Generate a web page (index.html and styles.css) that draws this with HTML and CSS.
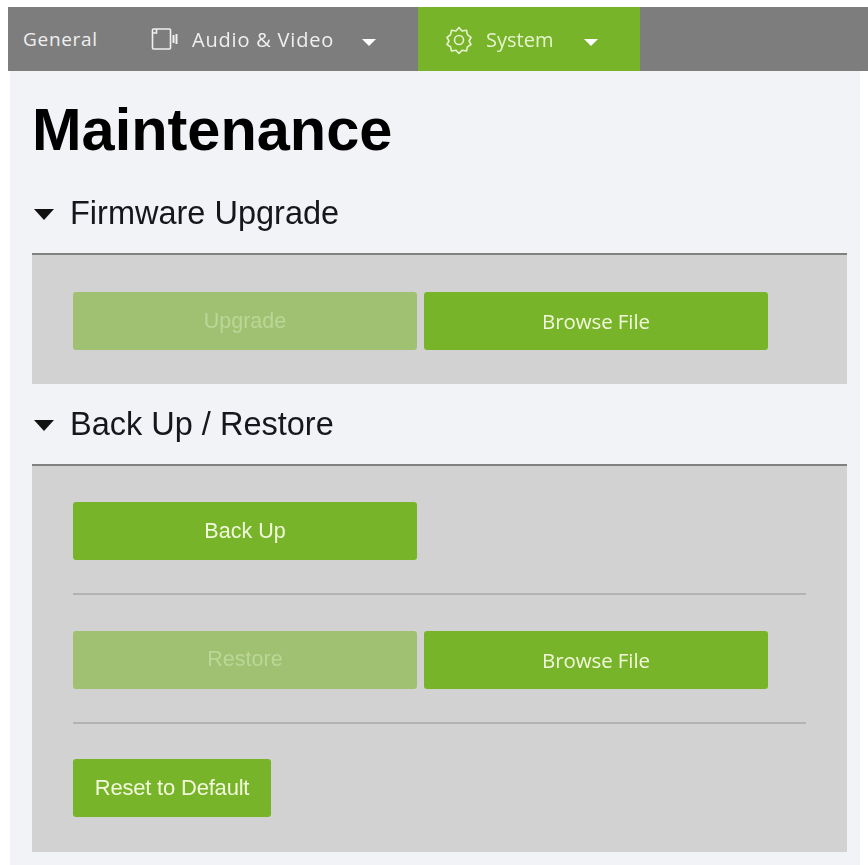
FILE: index.html
```html
<!DOCTYPE html>
<html lang="en">
<head>
    <meta charset="UTF-8">
    <meta name="viewport" content="width=device-width, initial-scale=1.0">
    <title>Maintenance</title>
    <link rel="stylesheet" href="styles.css">
</head>
<body>
    <nav class="nav">
        <a class="tab general">General</a>
        <a class="tab audio">
            <svg class="tabIcon" width="28" height="24" viewBox="0 0 28 24" fill="none" stroke="currentColor" stroke-width="1.6">
                <rect x="1.5" y="2" width="18" height="20" rx="1"/>
                <path d="M1.5 6h4V2"/>
                <path d="M22.5 8v8M25.5 7v10" stroke-width="2"/>
            </svg>
            <span>Audio &amp; Video</span>
            <i class="caret"></i>
        </a>
        <a class="tab system">
            <svg class="tabIcon" width="26" height="28" viewBox="0 0 26 28" fill="none" stroke="currentColor" stroke-width="1.6" stroke-linejoin="round">
                <path d="M13 1.5l3 3.5 4.5-.8.9 4.5 3.600 2.800-2 3.500 2 3.500-3.600 2.300-.9 4.200-4.500-.8-3 3.300-3-3.300-4.500.8-.9-4.200-3.600-2.300 2-3.500-2-3.500 3.600-2.800.9-4.500 4.500.8z"/>
                <circle cx="13" cy="14" r="4.500"/>
            </svg>
            <span>System</span>
            <i class="caret"></i>
        </a>
    </nav>

    <div class="content">
        <h1 class="title">Maintenance</h1>

        <h2 class="secHead"><i class="secCaret"></i>Firmware Upgrade</h2>
        <section class="panel first">
            <div class="btnRow">
                <button class="btn wide off">Upgrade</button>
                <button class="btn wide browse">Browse File</button>
            </div>
        </section>

        <h2 class="secHead"><i class="secCaret"></i>Back Up / Restore</h2>
        <section class="panel">
            <div class="btnRow">
                <button class="btn wide">Back Up</button>
            </div>
            <hr class="line">
            <div class="btnRow">
                <button class="btn wide off">Restore</button>
                <button class="btn wide browse">Browse File</button>
            </div>
            <hr class="line">
            <div class="btnRow">
                <button class="btn reset">Reset to Default</button>
            </div>
        </section>
    </div>
</body>
</html>
```

FILE: styles.css
```css
body {
    margin: 0;
    padding: 7px 0 0 8px;
    background: #fff;
    font-family: "Liberation Sans", Arial, sans-serif;
    overflow: hidden;
}
.nav {
    height: 64px;
    display: flex;
    background: #7d7d7d;
    color: #f0f0f0;
    font-family: "Open Sans", sans-serif;
    font-size: 20px;
    filter: blur(0.5px);
}
.tab {
    display: flex;
    align-items: center;
    box-sizing: border-box;
}
.general {
    width: 143px;
    padding-left: 15px;
    font-size: 19px;
    letter-spacing: 0.7px;
}
.audio {
    width: 267px;
}
.audio span {
    margin-left: 13px;
    letter-spacing: 0.8px;
}
.audio .caret {
    margin-left: 28px;
}
.system {
    width: 222px;
    height: 65px;
    padding-left: 28px;
    background: #78b42a;
    color: #e6f3cf;
}
.system span {
    margin-left: 14px;
}
.system .caret {
    margin-left: 31px;
}
.tabIcon {
    flex: none;
}
.caret {
    width: 0;
    height: 0;
    margin-top: 6px;
    border-left: 7px solid transparent;
    border-right: 7px solid transparent;
    border-top: 7px solid #fff;
}
.content {
    margin: 0 8px 0 2px;
    padding: 0 13px 13px 22px;
    background: #f1f3f7;
    height: 794px;
    box-sizing: border-box;
    filter: blur(0.5px);
}
.title {
    margin: 0;
    padding-top: 23px;
    padding-bottom: 7px;
    font-size: 59.500px;
    line-height: 72px;
    font-weight: 700;
    color: #000;
}
.secHead {
    display: flex;
    align-items: center;
    margin: 0;
    height: 80px;
    font-size: 32.500px;
    font-weight: 400;
    color: #16161c;
}
.secCaret {
    width: 0;
    height: 0;
    margin: 2px 16px 0 2px;
    border-left: 10px solid transparent;
    border-right: 10px solid transparent;
    border-top: 11px solid #111;
}
.panel {
    padding: 36px 41px 35px;
    background: #d2d2d2;
    border-top: 2px solid #808080;
}
.panel.first {
    padding-top: 37px;
    padding-bottom: 34px;
}
.btnRow {
    display: flex;
    gap: 7px;
}
.btn {
    height: 58px;
    padding: 0;
    border: 0;
    border-radius: 3px;
    background: #78b42a;
    color: #f2f8dc;
    font-family: "Liberation Sans", Arial, sans-serif;
    font-size: 21.500px;
}
.wide {
    width: 344px;
}
.browse {
    font-family: "Open Sans", sans-serif;
    font-size: 20.500px;
    letter-spacing: -0.1px;
}
.off {
    background: #a0c072;
    color: #bcd696;
}
.reset {
    width: 198px;
    font-size: 22px;
    letter-spacing: -0.2px;
}
.line {
    margin: 33px 0 35.500px;
    width: 733px;
    height: 2px;
    border: 0;
    background: #b3b3b3;
}
```
